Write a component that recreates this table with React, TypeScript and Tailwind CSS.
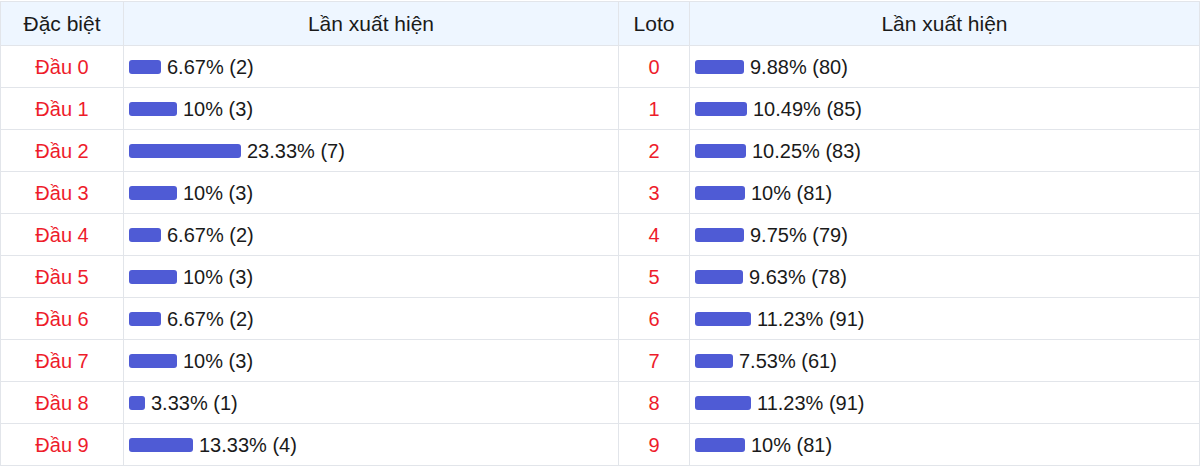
const dacBiet = [
  { label: "Đầu 0", pct: 6.67, count: 2 },
  { label: "Đầu 1", pct: 10, count: 3 },
  { label: "Đầu 2", pct: 23.33, count: 7 },
  { label: "Đầu 3", pct: 10, count: 3 },
  { label: "Đầu 4", pct: 6.67, count: 2 },
  { label: "Đầu 5", pct: 10, count: 3 },
  { label: "Đầu 6", pct: 6.67, count: 2 },
  { label: "Đầu 7", pct: 10, count: 3 },
  { label: "Đầu 8", pct: 3.33, count: 1 },
  { label: "Đầu 9", pct: 13.33, count: 4 },
];

const loto = [
  { label: "0", pct: 9.88, count: 80 },
  { label: "1", pct: 10.49, count: 85 },
  { label: "2", pct: 10.25, count: 83 },
  { label: "3", pct: 10, count: 81 },
  { label: "4", pct: 9.75, count: 79 },
  { label: "5", pct: 9.63, count: 78 },
  { label: "6", pct: 11.23, count: 91 },
  { label: "7", pct: 7.53, count: 61 },
  { label: "8", pct: 11.23, count: 91 },
  { label: "9", pct: 10, count: 81 },
];

const Bar = ({ pct, count, scale }: { pct: number; count: number; scale: number }) => (
  <div className="flex items-center gap-[6px]">
    <div className="h-[14px] rounded-[3px] bg-[#4f5bd5]" style={{ width: Math.round(pct * scale) }} />
    <span>
      {pct}% ({count})
    </span>
  </div>
);

export default function App() {
  return (
    <div className="w-[1200px] bg-white pt-px font-['Liberation_Sans',Arial,sans-serif] text-[20px] text-[#1a1a1a]">
      <table className="w-[1200px] table-fixed border-collapse">
        <colgroup>
          <col className="w-[123px]" />
          <col className="w-[495px]" />
          <col className="w-[71px]" />
          <col />
        </colgroup>
        <thead>
          <tr className="h-[44px] bg-[#eef6ff] text-[21px]">
            <th className="border border-[#e2e5ea] font-normal">Đặc biệt</th>
            <th className="border border-[#e2e5ea] font-normal">Lần xuất hiện</th>
            <th className="border border-[#e2e5ea] font-normal">Loto</th>
            <th className="border border-[#e2e5ea] font-normal">Lần xuất hiện</th>
          </tr>
        </thead>
        <tbody>
          {dacBiet.map((d, i) => (
            <tr key={d.label} className="h-[42px]">
              <td className="border border-[#e2e5ea] text-center text-[#ee1c2b]">{d.label}</td>
              <td className="border border-[#e2e5ea] px-[5px]">
                <Bar pct={d.pct} count={d.count} scale={4.8} />
              </td>
              <td className="border border-[#e2e5ea] text-center text-[#ee1c2b]">{loto[i].label}</td>
              <td className="border border-[#e2e5ea] px-[5px]">
                <Bar pct={loto[i].pct} count={loto[i].count} scale={5} />
              </td>
            </tr>
          ))}
        </tbody>
      </table>
    </div>
  );
}
